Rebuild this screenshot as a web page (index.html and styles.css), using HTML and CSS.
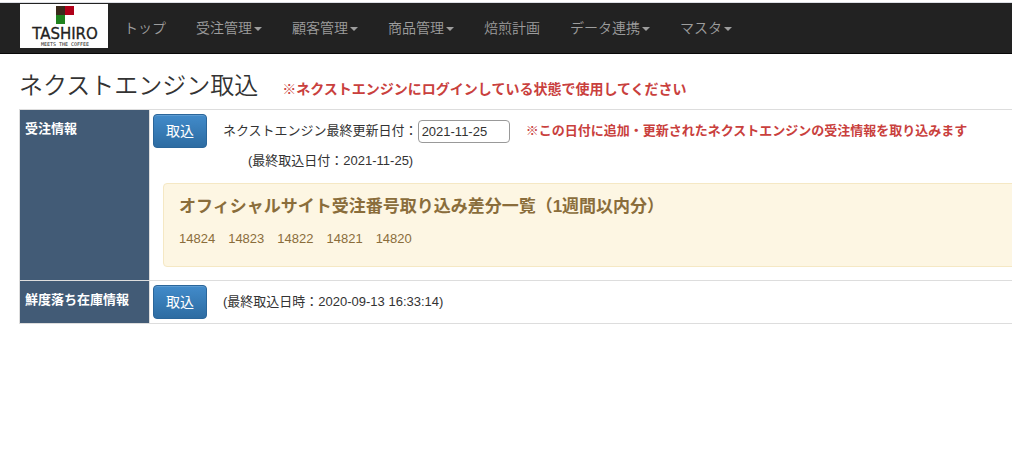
FILE: index.html
```
<!DOCTYPE html>
<html lang="ja">
<head>
    <meta charset="UTF-8">
    <meta name="viewport" content="width=device-width, initial-scale=1.0">
    <title>ネクストエンジン取込</title>
    <link rel="stylesheet" href="styles.css">
</head>
<body>
    <nav class="navbar">
        <a class="navbar-brand" href="#">
            <svg width="88" height="44" viewBox="0 0 88 44" role="img" aria-label="TASHIRO">
                <rect width="88" height="44" fill="#fff"/>
                <rect x="36" y="2" width="9" height="9" fill="#3b2a1c"/>
                <rect x="45" y="2" width="9" height="9" fill="#b00019"/>
                <rect x="36" y="11" width="9" height="9" fill="#20831f"/>
                <text class="logo-name" x="45" y="35" text-anchor="middle">TASHIRO</text>
                <text class="logo-sub" x="45" y="42" text-anchor="middle">MEETS THE COFFEE</text>
            </svg>
        </a>
        <ul class="navbar-nav">
            <li><a href="#">トップ</a></li>
            <li><a href="#">受注管理<span class="caret"></span></a></li>
            <li><a href="#">顧客管理<span class="caret"></span></a></li>
            <li><a href="#">商品管理<span class="caret"></span></a></li>
            <li><a href="#">焙煎計画</a></li>
            <li><a href="#">データ連携<span class="caret"></span></a></li>
            <li><a href="#">マスタ<span class="caret"></span></a></li>
        </ul>
    </nav>

    <main class="container">
        <div class="page-title">
            <h1>ネクストエンジン取込</h1>
            <span class="text-danger title-note">※ネクストエンジンにログインしている状態で使用してください</span>
        </div>

        <table class="table">
            <tr>
                <th scope="row">受注情報</th>
                <td>
                    <div class="import-row">
                        <button type="button" class="btn">取込</button>
                        <div class="date-field">
                            <label for="updateDate">ネクストエンジン最終更新日付：</label>
                            <input type="text" id="updateDate" class="date-input" value="2021-11-25">
                        </div>
                        <span class="text-danger">※この日付に追加・更新されたネクストエンジンの受注情報を取り込みます</span>
                    </div>
                    <div class="last-date">(最終取込日付：2021-11-25)</div>
                    <div class="alert">
                        <h2>オフィシャルサイト受注番号取り込み差分一覧（1週間以内分）</h2>
                        <div class="order-list">
                            <span>14824</span>
                            <span>14823</span>
                            <span>14822</span>
                            <span>14821</span>
                            <span>14820</span>
                        </div>
                    </div>
                </td>
            </tr>
            <tr>
                <th scope="row">鮮度落ち在庫情報</th>
                <td>
                    <div class="import-row">
                        <button type="button" class="btn">取込</button>
                        <span>(最終取込日時：2020-09-13 16:33:14)</span>
                    </div>
                </td>
            </tr>
        </table>
    </main>
</body>
</html>
```
FILE: styles.css
```
* {
    box-sizing: border-box;
}

body {
    margin: 0;
    padding-top: 2px;
    font-family: "Liberation Sans", "Noto Sans CJK JP", sans-serif;
    font-size: 13px;
    line-height: 20px;
    color: #333;
    background-color: #fff;
}

/* ナビゲーション */
.navbar {
    display: flex;
    align-items: flex-start;
    height: 52px;
    padding-left: 20px;
    background-color: #222;
    border-top: 1px solid #dcdee4;
    border-bottom: 1px solid #080808;
}

.navbar-brand {
    padding-top: 1px;
}

.navbar-brand svg {
    display: block;
}

.logo-name {
    font-family: "DejaVu Sans", sans-serif;
    font-size: 15px;
    fill: #222;
    stroke: #222;
    stroke-width: 0.3px;
}

.logo-sub {
    font-family: "DejaVu Sans Mono", monospace;
    font-size: 5px;
    fill: #222;
}

.navbar-nav {
    display: flex;
    margin: 0;
    padding: 0 0 0 1px;
    list-style: none;
}

.navbar-nav a {
    display: block;
    padding: 15px;
    font-size: 14px;
    font-weight: 350;
    color: #9d9d9d;
    text-decoration: none;
    white-space: nowrap;
}

.navbar-nav a:hover {
    color: #fff;
}

.caret {
    display: inline-block;
    margin-left: 2px;
    vertical-align: middle;
    border-top: 4px solid;
    border-right: 4px solid transparent;
    border-left: 4px solid transparent;
}

/* タイトル */
.container {
    padding: 15px 0 0 19px;
    overflow-x: hidden;
}

.page-title {
    display: flex;
    align-items: baseline;
    gap: 24px;
    height: 40px;
    white-space: nowrap;
}

.page-title h1 {
    margin: 0;
    font-size: 24px;
    font-weight: 350;
    line-height: 34px;
}

.text-danger {
    color: #c9403d;
    font-weight: bold;
}

.title-note {
    font-size: 14px;
}

/* 取込テーブル */
.table {
    width: 110%;
    border-collapse: collapse;
    white-space: nowrap;
}

.table th,
.table td {
    border: 1px solid #ddd;
    vertical-align: top;
    text-align: left;
}

.table th {
    width: 130px;
    padding: 9px 5px;
    color: #fff;
    background-color: #425b76;
}

.table td {
    padding: 4px 3px;
}

.import-row {
    display: flex;
    align-items: center;
    gap: 16px;
}

.btn {
    height: 34px;
    padding: 6px 12px;
    font-family: inherit;
    font-size: 14px;
    line-height: 20px;
    color: #fff;
    background-image: linear-gradient(#428bca, #2d6ca2);
    border: 1px solid #2b669a;
    border-radius: 4px;
    box-shadow: inset 0 1px 0 rgba(255, 255, 255, 0.15);
    cursor: pointer;
}

.btn:hover {
    background-image: none;
    background-color: #2d6ca2;
}

.date-field {
    display: flex;
    align-items: center;
}

.date-input {
    width: 92px;
    height: 23px;
    padding: 1px 3px;
    font-family: inherit;
    font-size: 13px;
    color: #333;
    border: 1px solid #999;
    border-radius: 4px;
}

.last-date {
    padding: 3px 0 0 95px;
}

.alert {
    margin: 12px 10px 9px;
    padding: 13px 15px 17px;
    color: #8a6d3b;
    background-color: #fdf6e3;
    border: 1px solid #f5e8c4;
    border-radius: 4px;
}

.alert h2 {
    margin: 0 0 12px;
    font-size: 17px;
    line-height: 20px;
}

.order-list {
    display: flex;
    gap: 13px;
}
```
